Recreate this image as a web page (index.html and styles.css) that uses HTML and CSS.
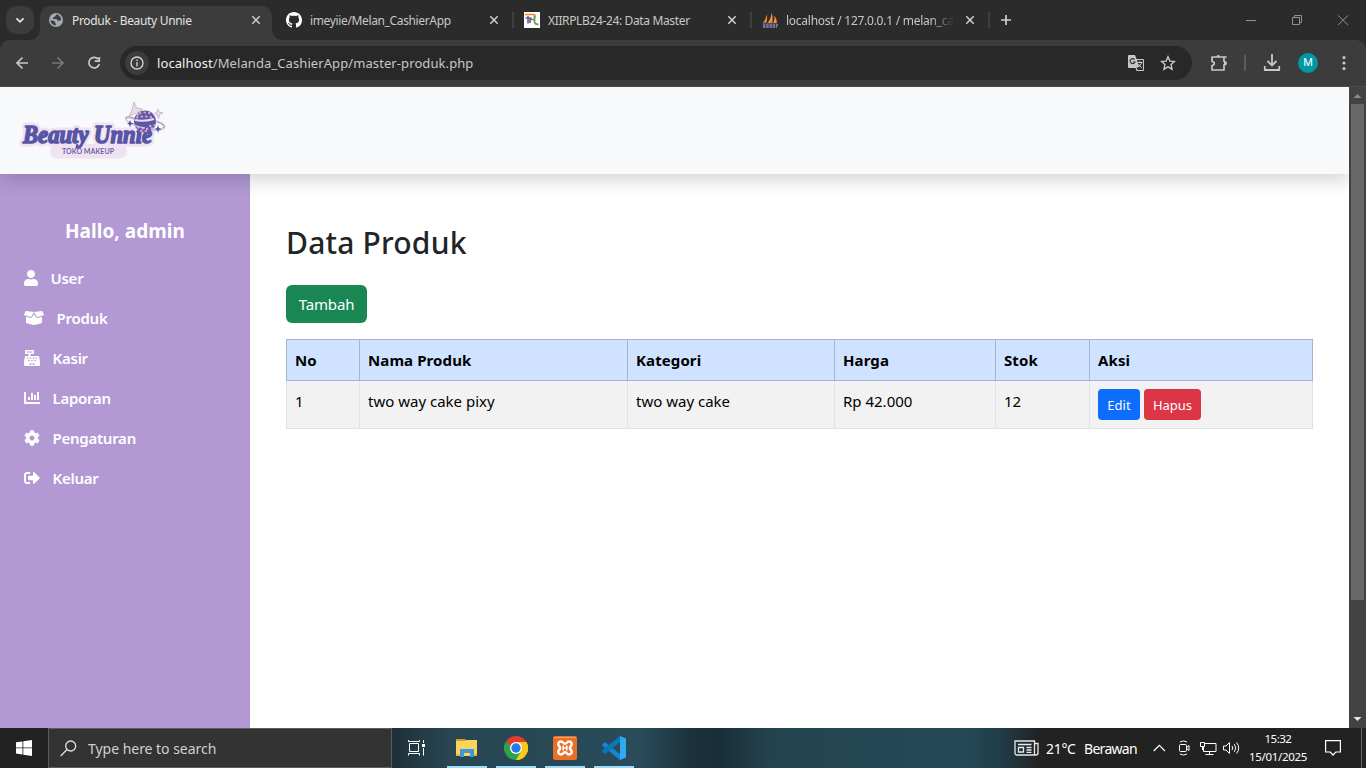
FILE: index.html
```html
<!DOCTYPE html>
<html lang="id">
<head>
<meta charset="utf-8">
<title>Produk - Beauty Unnie</title>
<link rel="stylesheet" href="styles.css">
</head>
<body>
<div class="browser">
  <div class="tabstrip">
    <div class="tab-menu"><svg width="28" height="28" fill="none" stroke="#e3e3e3" stroke-width="1.8"><path d="M10.500 12.300l3.500 3.500 3.500-3.500"/></svg></div>
    <div class="tab active">
      <svg class="fav" width="16" height="16" viewBox="0 0 16 16"><circle cx="8" cy="8" r="7" fill="#a4a9b3"/><path d="M8.500 2.500q-1 .3-.8 1.300-.2 1 -1.700 1.200Q4.500 5.500 5 6.800q1.500.3 3 .2 1.500.3 1.500 1.700 2 .2 3.800-.4-.2-3.800-3-5.300-1-.6-1.800-.5zM2.500 8.500q2.500-.3 3.500.7 1.300.3 1.300 1.500-.2.900.7 1.300-.2 1-.7 1.400Q3 12.500 2.500 8.500z" fill="#3c3c3c"/></svg>
      <span class="tab-title t1">Produk - Beauty Unnie</span>
      <svg class="close" width="10" height="10" viewBox="0 0 10 10"><path d="M1.300 1.300l7.400 7.400m0-7.400l-7.400 7.400"/></svg>
    </div>
    <div class="tab">
      <svg class="fav" width="16" height="16" viewBox="0 0 16 16"><path fill="#fff" d="M8 0C3.580 0 0 3.580 0 8c0 3.540 2.290 6.530 5.470 7.590.4.070.55-.17.55-.38 0-.19-.01-.82-.01-1.490-2.010.37-2.530-.49-2.690-.94-.09-.23-.48-.94-.82-1.130-.28-.15-.68-.52-.01-.53.63-.01 1.080.58 1.230.82.720 1.210 1.870.87 2.330.66.070-.52.280-.87.510-1.070-1.780-.2-3.640-.89-3.640-3.950 0-.87.310-1.590.820-2.150-.08-.2-.36-1.020.08-2.120 0 0 .67-.21 2.200.820.640-.18 1.320-.27 2-.27s1.360.09 2 .27c1.530-1.040 2.200-.82 2.200-.82.440 1.100.16 1.920.08 2.120.51.56.82 1.270.82 2.150 0 3.070-1.870 3.750-3.650 3.950.29.25.54.73.54 1.480 0 1.070-.01 1.930-.01 2.200 0 .21.15.46.55.38A8.010 8.010 0 0 0 16 8c0-4.420-3.580-8-8-8z"/></svg>
      <span class="tab-title t2">imeyiie/Melan_CashierApp</span>
      <svg class="close" width="10" height="10" viewBox="0 0 10 10"><path d="M1.300 1.300l7.400 7.400m0-7.400l-7.400 7.400"/></svg>
    </div>
    <div class="tab divided">
      <svg class="fav" width="16" height="16" viewBox="0 0 16 16"><path fill="#fff" d="M0 0h16v16H0z"/><g fill="none" stroke-width="1.700"><path stroke="#f08a24" d="M1 2.500h8.500q2 .5 1.500 3"/><path stroke="#d33a3a" d="M1.500 6h6M6 6v5"/><path stroke="#2f86c9" d="M4 4v7.500M6 7.500h4"/><path stroke="#57ab45" d="M10.500 4v6q.5 2.500 4 2.300"/></g></svg>
      <span class="tab-title t3">XIIRPLB24-24: Data Master</span>
      <svg class="close" width="10" height="10" viewBox="0 0 10 10"><path d="M1.300 1.300l7.400 7.400m0-7.400l-7.400 7.400"/></svg>
    </div>
    <div class="tab divided">
      <svg class="fav" width="16" height="16" viewBox="0 0 16 16"><path fill="#f2902c" d="M5 2Q4 7 1 11l3.500-.5Q5.500 6 5 2zM9.500.5Q9 7 5.500 11l5-.2Q11.500 5 9.500.5zM12.500 3.500q.5 4-1.200 7.300l3.700.4Q15 7 12.500 3.500z"/><path d="M1 13h15M1 15h14" stroke="#8b90bd" stroke-width="1.500" stroke-dasharray="2.500 .7"/><path d="M.5 11.700h14" stroke="#4b5384"/></svg>
      <span class="tab-title t4 fade">localhost / 127.0.0.1 / melan_cas</span>
      <svg class="close" width="10" height="10" viewBox="0 0 10 10"><path d="M1.300 1.300l7.400 7.400m0-7.400l-7.400 7.400"/></svg>
    </div>
    <div class="new-tab"><svg width="12" height="12" stroke="#d0d0d0" stroke-width="1.700"><path d="M6 1v10M1 6h10"/></svg></div>
    <div class="window-buttons">
      <svg width="46" height="40" viewBox="0 0 46 40"><path d="M18 20.500h10"/></svg>
      <svg width="46" height="40" viewBox="0 0 46 40"><path d="M18.500 17.500h7v7h-7zM20.500 17.500v-2h7v7h-2"/></svg>
      <svg width="46" height="40" viewBox="0 0 46 40"><path d="M18 15.500l10 9.500m0-9.500L18 25"/></svg>
    </div>
  </div>
  <div class="toolbar">
    <svg class="nav" width="36" height="46" viewBox="0 0 36 46"><path d="M16.500 17.500L11 23l5.500 5.500M11.500 23H22"/></svg>
    <svg class="nav dim" width="36" height="46" viewBox="0 0 36 46"><path d="M15.500 17.500L21 23l-5.500 5.500M20.500 23H10"/></svg>
    <svg class="nav" width="36" height="46" viewBox="0 0 36 46"><path d="M20.300 19.300A5.300 5.300 0 1 0 21.300 24M21.300 17v4.200h-4.600"/></svg>
    <div class="omnibox">
      <div class="site-info"><svg width="14" height="14" fill="none" stroke="#d2d2d2" stroke-width="1.400"><circle cx="7" cy="7" r="6"/><path d="M7 6v4.500M7 3.500V5"/></svg></div>
      <span class="url"><b>localhost</b>/Melanda_CashierApp/master-produk.php</span>
      <svg class="translate" width="18" height="18" viewBox="0 0 18 18"><path fill="#c7c7c7" d="M2 1h6l1.500 4H16q1 0 1 1v10q0 1-1 1H9.500l-1-3H2q-1 0-1-1V2q0-1 1-1z"/><path fill="#2c2c2c" d="M10 6h6v10h-5.500l-1-3H12z"/><path d="M7.600 5.500A2.500 2.500 0 1 0 8 8H5.800" fill="none" stroke="#333" stroke-width="1.200"/><path d="M10.500 8.500h5M13 7v1.500M14.500 9q-1 3-4 4.500M11.500 10q1 2 3.500 4" fill="none" stroke="#c7c7c7"/></svg>
      <svg class="star" width="16" height="16" viewBox="0 0 16 16"><path d="M8 1.800l1.900 4.300 4.600.4-3.500 3.100 1.100 4.600L8 11.800l-4.100 2.400L5 9.600 1.500 6.500l4.600-.4z" fill="none" stroke="#c7c7c7" stroke-width="1.400"/></svg>
    </div>
    <svg class="puzzle" width="18" height="18" viewBox="0 0 18 18"><path d="M2 3h14v0H14v4.500q2 .2 2 1.700t-2 1.700V16H2v-4.500q2.300-.4 2.300-2T2 7.500V3h12" fill="none" stroke="#c7c7c7" stroke-width="1.700" stroke-linejoin="round"/><path d="M6.500 3q0-2 1.800-2t1.700 2zM14 7.500q2.700 0 2.700 1.700T14 11z" fill="#c7c7c7"/></svg>
    <i class="bar"></i>
    <svg class="download" width="20" height="18" viewBox="0 0 20 18"><path d="M10 0v11M5.500 7L10 11.500 14.500 7M2.800 12v4h14.400v-4" fill="none" stroke="#c7c7c7" stroke-width="1.800"/></svg>
    <div class="avatar">M</div>
    <svg class="more" width="4" height="16" fill="#c7c7c7"><circle cx="2" cy="2.500" r="1.600"/><circle cx="2" cy="8" r="1.600"/><circle cx="2" cy="13.500" r="1.600"/></svg>
  </div>
</div>

<div class="viewport">
  <div class="page">
    <header class="header">
      <svg class="logo" width="150" height="60" viewBox="0 0 150 60">
        <rect x="31" y="42" width="77" height="14.500" rx="7.200" fill="#f1e2f1"/>
        <g stroke-linejoin="round">
          <text class="script outline" x="4" y="40.500" textLength="129" lengthAdjust="spacingAndGlyphs">Beauty Unnie</text>
          <text class="script" x="4" y="40.500" textLength="129" lengthAdjust="spacingAndGlyphs">Beauty Unnie</text>
        </g>
        <circle cx="126" cy="19.500" r="11" fill="#5d57a6"/>
        <g stroke="#d0a3cc" stroke-width="2.200" fill="none" stroke-dasharray="2.400 2.200"><path d="M120 11.500q6-2 12 0M117 15.500q9-2 18 0M130 24q3 0 6-1M118 25q8 3 16 1M121 29h9"/></g>
        <path d="M116 18q8 2 19-1" stroke="#eadcf0" stroke-width="2" fill="none"/>
        <path d="M115 17q-11-3-7 2 8 6 18 7M137 19q11 3 8 7-3 3-13 2" fill="none" stroke="#d9bddb" stroke-width="1.500"/>
        <path d="M115 16q-9-3-8 1M138 20q9 3 6 6" fill="none" stroke="#77719a" stroke-width=".7"/>
        <path d="M115 0l2.500 6 6 1-5 3 1 4-4-2.500-5 2.500 2-5zM139 7l1 3 4 1-3.500 1.500-1 4-1.500-4-2.500-1 2.500-1z" fill="#eadceb" stroke="#aaa1ad" stroke-width=".6"/>
        <path d="M111 18l1 2.500 3 1-3 1-1 3-1-3-2-1 2-1zM139 23l1 3 3 1-3 1-1 3-1-3-3-1 3-1z" fill="#5755a5"/>
        <text class="tag" x="43" y="52" textLength="52">TOKO MAKEUP</text>
      </svg>
    </header>
    <div class="columns">
      <nav class="sidebar">
        <h2 class="hello">Hallo, admin</h2>
        <a class="item"><svg width="14" height="16" viewBox="0 0 448 512"><path d="M224 256c70.700 0 128-57.300 128-128S294.700 0 224 0 96 57.300 96 128s57.300 128 128 128zm89.600 32h-16.700c-22.200 10.200-46.900 16-72.900 16s-50.600-5.800-72.900-16h-16.700C60.200 288 0 348.200 0 422.400V464c0 26.500 21.500 48 48 48h352c26.500 0 48-21.500 48-48v-41.600c0-74.200-60.200-134.400-134.400-134.400z"/></svg><span>User</span></a>
        <a class="item"><svg width="20" height="16" viewBox="0 0 640 512"><path d="M425.700 256c-16.900 0-32.800-9-41.400-23.400L320 126l-64.200 106.600c-8.700 14.500-24.600 23.500-41.500 23.500-4.500 0-9-.6-13.300-1.900L64 215v178c0 14.700 10 27.500 24.200 31l216.200 54.100c10.200 2.500 20.900 2.500 31 0L551.800 424c14.200-3.600 24.200-16.400 24.200-31V215l-137 39.100c-4.300 1.300-8.800 1.900-13.300 1.900zm212.600-112.200L586.800 41c-3.100-6.200-9.800-9.800-16.700-8.900L320 64l91.700 152.100c3.800 6.300 11.400 9.300 18.500 7.300l197.900-56.500c9.900-2.900 14.700-13.900 10.200-23.100zM53.200 41L1.700 143.800c-4.600 9.200.3 20.200 10.100 23l197.900 56.500c7.100 2 14.700-1 18.500-7.300L320 64 69.800 32.100c-6.900-.8-13.500 2.700-16.600 8.900z"/></svg><span>Produk</span></a>
        <a class="item"><svg width="16" height="16" viewBox="0 0 512 512"><path d="M511.100 378.800l-26.700-160c-2.600-15.400-15.900-26.700-31.600-26.700H208v-64h96c8.800 0 16-7.200 16-16V16c0-8.800-7.200-16-16-16H48c-8.800 0-16 7.200-16 16v96c0 8.800 7.200 16 16 16h96v64H59.100c-15.600 0-29 11.300-31.600 26.700L.8 378.700c-.6 3.500-.9 7-.9 10.500V480c0 17.700 14.300 32 32 32h448c17.700 0 32-14.300 32-32v-90.700c.1-3.500-.2-7-.8-10.500zM280 248c0-8.800 7.200-16 16-16h16c8.800 0 16 7.200 16 16v16c0 8.800-7.200 16-16 16h-16c-8.800 0-16-7.200-16-16v-16zm-32 64h16c8.800 0 16 7.200 16 16v16c0 8.800-7.200 16-16 16h-16c-8.800 0-16-7.200-16-16v-16c0-8.800 7.200-16 16-16zm-32-80c8.800 0 16 7.200 16 16v16c0 8.800-7.200 16-16 16h-16c-8.800 0-16-7.200-16-16v-16c0-8.800 7.200-16 16-16h16zM80 80V48h192v32H80zm40 200h-16c-8.800 0-16-7.200-16-16v-16c0-8.800 7.200-16 16-16h16c8.800 0 16 7.200 16 16v16c0 8.800-7.200 16-16 16zm16 64v-16c0-8.800 7.200-16 16-16h16c8.800 0 16 7.200 16 16v16c0 8.800-7.200 16-16 16h-16c-8.800 0-16-7.200-16-16zm216 112c0 4.400-3.600 8-8 8H168c-4.400 0-8-3.600-8-8v-16c0-4.400 3.600-8 8-8h176c4.400 0 8 3.600 8 8v16zm24-112c0 8.800-7.200 16-16 16h-16c-8.800 0-16-7.200-16-16v-16c0-8.800 7.200-16 16-16h16c8.800 0 16 7.200 16 16v16zm48-80c0 8.800-7.200 16-16 16h-16c-8.800 0-16-7.200-16-16v-16c0-8.800 7.200-16 16-16h16c8.800 0 16 7.200 16 16v16z"/></svg><span>Kasir</span></a>
        <a class="item"><svg width="16" height="16" viewBox="0 0 16 16"><path d="M0 2h2v10h14v2H0zM4 7h2v3H4zM7 3h2v7H7zM10 5h2v5h-2zM13 2h2v8h-2z"/></svg><span>Laporan</span></a>
        <a class="item"><svg width="16" height="16" viewBox="0 0 512 512"><path d="M487.400 315.700l-42.600-24.600c4.300-23.200 4.300-47 0-70.200l42.600-24.600c4.900-2.800 7.100-8.600 5.500-14-11.100-35.600-30-67.800-54.700-94.600-3.800-4.100-10-5.100-14.800-2.300L380.800 110c-17.900-15.400-38.500-27.300-60.800-35.100V25.800c0-5.600-3.900-10.500-9.400-11.700-36.700-8.200-74.300-7.800-109.200 0-5.500 1.200-9.400 6.100-9.400 11.700V75c-22.200 7.900-42.800 19.800-60.800 35.100L88.700 85.500c-4.900-2.800-11-1.900-14.800 2.300-24.700 26.700-43.600 58.900-54.700 94.600-1.700 5.400.6 11.200 5.500 14L67.300 221c-4.300 23.200-4.300 47 0 70.200l-42.600 24.600c-4.900 2.800-7.100 8.600-5.500 14 11.100 35.600 30 67.800 54.700 94.600 3.800 4.100 10 5.100 14.800 2.300l42.600-24.600c17.900 15.400 38.500 27.300 60.800 35.100v49.200c0 5.600 3.900 10.500 9.400 11.700 36.700 8.200 74.300 7.800 109.200 0 5.500-1.200 9.400-6.100 9.400-11.700v-49.200c22.200-7.900 42.800-19.800 60.800-35.100l42.600 24.600c4.900 2.800 11 1.900 14.800-2.300 24.700-26.700 43.600-58.900 54.700-94.600 1.500-5.500-.7-11.300-5.600-14.100zM256 336c-44.100 0-80-35.900-80-80s35.900-80 80-80 80 35.900 80 80-35.900 80-80 80z"/></svg><span>Pengaturan</span></a>
        <a class="item"><svg width="16" height="16" viewBox="0 0 512 512"><path d="M497 273L329 441c-15 15-41 4.500-41-17v-96H152c-13.300 0-24-10.700-24-24v-96c0-13.300 10.700-24 24-24h136V88c0-21.400 25.900-32 41-17l168 168c9.300 9.400 9.300 24.600 0 34zM192 436v-40c0-6.600-5.400-12-12-12H96c-17.700 0-32-14.300-32-32V160c0-17.700 14.300-32 32-32h84c6.600 0 12-5.400 12-12V76c0-6.600-5.400-12-12-12H96c-53 0-96 43-96 96v192c0 53 43 96 96 96h84c6.600 0 12-5.400 12-12z"/></svg><span>Keluar</span></a>
      </nav>
      <main class="content">
        <h1 class="title">Data Produk</h1>
        <a class="btn add">Tambah</a>
        <table class="table">
          <colgroup><col class="c-no"><col class="c-name"><col class="c-cat"><col class="c-price"><col class="c-stock"><col class="c-act"></colgroup>
          <thead><tr><th>No</th><th>Nama Produk</th><th>Kategori</th><th>Harga</th><th>Stok</th><th>Aksi</th></tr></thead>
          <tbody><tr><td>1</td><td>two way cake pixy</td><td>two way cake</td><td>Rp 42.000</td><td>12</td><td><div class="actions"><a class="btn small edit">Edit</a><a class="btn small delete">Hapus</a></div></td></tr></tbody>
        </table>
      </main>
    </div>
  </div>
  <div class="scrollbar">
    <svg width="17" height="17"><path d="M4.500 11l4-4 4 4z" fill="#8b8b8b"/></svg>
    <div class="thumb"></div>
    <svg width="17" height="17"><path d="M4.500 6l4 4 4-4z" fill="#e8e8e8"/></svg>
  </div>
</div>

<div class="taskbar">
  <div class="start"><svg width="16" height="16" fill="#fff"><path d="M0 2.300l6.500-.9v6.100H0zM7.300 1.300L16 0v7.500H7.300zM0 8.300h6.500v6.200L0 13.600zM7.300 8.300H16V16l-8.700-1.200z"/></svg></div>
  <div class="search"><svg width="17" height="17" fill="none" stroke="#e0e0e0" stroke-width="1.300"><circle cx="10.700" cy="6" r="5"/><path d="M7 9.500L.7 16"/></svg><span>Type here to search</span></div>
  <div class="task-view"><svg width="17" height="16" viewBox="0 0 17 16" fill="none" stroke="#fff"><path d="M1.500 3.500h9v8h-9zM.5 0v1.500h11V0M.5 15.500v-2h11v2M15.500 0v3M15.500 8v7.500"/><path d="M14 4h3v3h-3z" fill="#fff" stroke="none"/></svg></div>
  <div class="app"><svg width="24" height="24" viewBox="0 0 24 24"><path d="M1 3h9l2 2H1z" fill="#d99a14"/><path d="M1 5h9l1.500-1H22v16H1z" fill="#fbd45f"/><path d="M5 13h14v8h-4v-4H9v4H5z" fill="#3f97dd"/><path d="M1 18h4v2H1zM19 18h3v2h-3z" fill="#edb535"/></svg></div>
  <div class="app"><svg width="24" height="24" viewBox="0 0 24 24"><path d="M12 12L1.600 6A12 12 0 0 1 22.400 6z" fill="#e33b2e"/><path d="M12 12L22.400 6A12 12 0 0 1 12 24z" fill="#fdc918"/><path d="M12 12v12A12 12 0 0 1 1.600 6z" fill="#2ea24c"/><path d="M12 6h10.400A12 12 0 0 1 12 24l5.200-9z" fill="#fdc918"/><path d="M6.800 15L1.600 6 12 12l5.200 3L12 24z" fill="#2ea24c"/><circle cx="12" cy="12" r="6" fill="#fff"/><circle cx="12" cy="12" r="4.700" fill="#2878ea"/></svg></div>
  <div class="app"><svg width="24" height="24" viewBox="0 0 24 24"><rect width="24" height="24" rx="2" fill="#e96f24"/><path d="M1 1.500h22" stroke="#f5a36b"/><path d="M8 5.500c-2.700 0-3.500 2.800-2 4.300 1.300 1.300 1.300 3.100 0 4.400-1.500 1.500-.7 4.300 2 4.300 2.300 0 2.200-2.200 4-2.200s1.700 2.200 4 2.200c2.700 0 3.500-2.800 2-4.300-1.300-1.300-1.300-3.100 0-4.400 1.500-1.500.7-4.300-2-4.300-2.300 0-2.200 2.200-4 2.200S10.300 5.500 8 5.500z" fill="none" stroke="#fff" stroke-width="2.500"/><path d="M10.200 9.500v5M13.800 9.500v5M10.200 12h3.600" stroke="#fff" stroke-width="1.600"/></svg></div>
  <div class="app"><svg width="24" height="24" viewBox="0 0 24 24"><path d="M.5 8L3 6l15 12v6L.5 10z" fill="#1686d3"/><path d="M.5 16L3 18 18 6V0L.5 14z" fill="#0878bd"/><path d="M18 0l6 2.500v19L18 24z" fill="#2eaaf2"/></svg></div>
  <div class="tray">
    <svg class="news" width="25" height="16" viewBox="0 0 25 16" fill="none" stroke="#e8e8e8" stroke-width="1.300"><path d="M1 1h19.500v14H3q-2 0-2-2zM20.500 3.500H24V13q0 2-2 2h-2"/><path d="M4 4.500h13.500M12.500 7.500h5M12.500 10h5M12.500 12.300h5M4.500 7.500h5v4.500h-5z"/></svg>
    <span class="weather temp">21°C</span><span class="weather cond">Berawan</span>
    <svg class="chev" width="13" height="8" fill="none" stroke="#fff" stroke-width="1.200"><path d="M.7 7l5.600-5.600L12 7"/></svg>
    <svg class="meet" width="12" height="16" fill="none" stroke="#fff"><path d="M1.500 5.500q0-1 1-1h5q1 0 1 1v5q0 1-1 1h-5q-1 0-1-1zM8.500 7.500l2.500-2v5l-2.500-2M2 2q3.500-2.200 7 0M2 14q3.500 2.200 7 0"/></svg>
    <svg class="net" width="17" height="15" fill="none" stroke="#fff"><path d="M5 2.500h11v8H3.500V6M9.500 10.500v3M5.500 13.500h8M.5 1.500h4v4h-4zM2.500 5.500V9"/></svg>
    <svg class="vol" width="17" height="14" fill="none" stroke="#fff"><path d="M.5 5h2.500l3.500-3.500v11L3 9H.5zM9 5q1.500 2 0 4M11.300 3.200q3 3.800 0 7.600M13.600 1.500q4.200 5.500 0 11"/></svg>
    <div class="clock"><span class="time">15:32</span><span class="date">15/01/2025</span></div>
    <svg class="note" width="16" height="16" fill="none" stroke="#fff" stroke-width="1.200"><path d="M.6.600h14.800V12h-4.600L8 15l-2.800-3H.6z"/></svg>
    <i class="peek"></i>
  </div>
</div>
</body>
</html>
```
FILE: styles.css
```css
* { box-sizing: border-box; }
body { margin: 0; width: 1366px; height: 768px; overflow: hidden; font-family: "Noto Sans", "Open Sans", sans-serif; font-size: 15px; display: flex; flex-direction: column; }
svg { display: block; flex: none; }
span { white-space: nowrap; }

/* Browser chrome */
.browser { height: 87px; background: #2b2b2b; flex: none; }
.tabstrip { height: 40px; display: flex; padding-left: 6px; }
.tab-menu { width: 28px; height: 28px; margin: 6px 6px 0 0; border-radius: 10px; background: #3c3c3c; }
.tab { width: 238px; height: 28px; margin-top: 6px; padding: 0 11px 0 14px; display: flex; align-items: center; gap: 8px; color: #c7c7c7; position: relative; }
.tab.active { width: 232px; height: 34px; padding: 0 11px 6px 8px; background: #3c3c3c; border-radius: 10px 10px 0 0; color: #e3e3e3; }
.tab.active::before, .tab.active::after { content: ""; position: absolute; bottom: 0; width: 10px; height: 10px; }
.tab.active::before { left: -10px; background: radial-gradient(circle at 0 0, #2b2b2b 9.500px, #3c3c3c 10px); }
.tab.active::after { right: -10px; background: radial-gradient(circle at 100% 0, #2b2b2b 9.500px, #3c3c3c 10px); }
.tab.divided::before { content: ""; position: absolute; left: 2px; top: 6px; width: 2px; height: 16px; background: #3f3f3f; }
.tab-title { flex: 1; min-width: 0; font-size: 12px; line-height: 18px; letter-spacing: -0.360px; padding-top: 1px; }
.t1 { letter-spacing: -0.320px; }
.t4 { letter-spacing: -0.260px; }
.fade { -webkit-mask-image: linear-gradient(90deg, #000 145px, transparent 168px); mask-image: linear-gradient(90deg, #000 145px, transparent 168px); }
.close { fill: none; stroke: #d0d0d0; stroke-width: 1.500px; }
.new-tab { width: 40px; height: 28px; margin-top: 6px; display: grid; place-items: center; position: relative; }
.new-tab::before { content: ""; position: absolute; left: 2px; top: 6px; width: 2px; height: 16px; background: #3f3f3f; }
.window-buttons { display: flex; margin-left: auto; fill: none; stroke: #919191; }
.toolbar { height: 47px; background: #3c3c3c; border-radius: 10px 10px 0 0; border-bottom: 1px solid #4b4b4b; display: flex; align-items: center; padding: 0 20px 0 6px; }
.nav { fill: none; stroke: #c7c7c7; stroke-width: 1.700px; }
.dim { stroke: #777; }
.omnibox { width: 1072px; height: 34px; margin-left: 6px; border-radius: 17px; background: #282828; display: flex; align-items: center; padding: 0 16px 0 5px; }
.site-info { width: 24px; height: 24px; border-radius: 12px; background: #3c3c3c; display: grid; place-items: center; }
.url { margin-left: 8px; flex: 1; color: #c7c7c7; font-size: 13px; letter-spacing: 0.090px; line-height: 20px; }
.url b { font-weight: 400; color: #f0f0f0; }
.translate { margin-right: 15px; }
.puzzle { margin-left: 18px; }
.bar { width: 2px; height: 16px; margin: 0 16px 0 16px; background: #5b5b5b; }
.avatar { width: 20px; height: 20px; margin-left: 16px; border-radius: 50%; background: #0097a7; color: #fff; font: 11px/20px Roboto, sans-serif; text-align: center; }
.more { margin-left: auto; }

/* Web page */
.viewport { height: 641px; display: flex; flex: none; background: #fff; }
.page { flex: 1; display: flex; flex-direction: column; overflow: hidden; }
.header { height: 87px; flex: none; background: #f8f9fb; box-shadow: 0 8px 16px rgba(0,0,0,.15); position: relative; z-index: 1; padding: 15px 19px; }
.logo { overflow: visible; }
.script { font: italic bold 25px "Liberation Serif", serif; fill: #5755a5; stroke: #5755a5; stroke-width: 1.600px; }
.outline { stroke: #f1e2f1; stroke-width: 7px; }
.tag { font: 700 7px Lato, sans-serif; fill: #6964a8; }
.columns { flex: 1; display: flex; }
.sidebar { width: 250px; background: #b299d4; padding: 43px 24px 0; color: #fff; fill: #fff; }
.hello { margin: 0 0 21px; text-align: center; font-size: 19px; line-height: 28px; font-weight: 700; letter-spacing: 0.050px; }
.item { display: flex; align-items: center; height: 24px; margin-bottom: 16px; gap: 12.500px; font-weight: 600; line-height: 24px; letter-spacing: -0.250px; }
.content { flex: 1; padding: 50px 36px 0; color: #000; }
.title { margin: 0; font-size: 30px; line-height: 38px; font-weight: 500; letter-spacing: 0.200px; color: #212529; }
.btn { display: inline-block; border-radius: 6px; color: #fff; }
.add { margin: 23px 0 16px; height: 38px; width: 81px; line-height: 38px; letter-spacing: -0.150px; text-align: center; background: #198754; vertical-align: top; }
.table { width: 1027px; table-layout: fixed; border-collapse: collapse; line-height: 24px; }
.c-no { width: 73px; } .c-name { width: 268px; } .c-cat { width: 207px; } .c-price { width: 161px; } .c-stock { width: 94px; }
.table th, .table td { padding: 8px; text-align: left; vertical-align: top; border: 1px solid #dee2e6; background: #f2f2f2; }
.table th { background: #cfe2ff; border-color: #a6b5cc; font-weight: 700; letter-spacing: 0.100px; }
.actions { display: flex; gap: 4px; }
.small { height: 31px; line-height: 32px; border-radius: 4px; font-size: 13px; text-align: center; }
.edit { width: 42px; background: #0d6efd; }
.delete { width: 57px; background: #dc3545; }
.scrollbar { width: 17px; background: #424242; display: flex; flex-direction: column; }
.thumb { width: 13px; height: 496px; margin: 0 2px auto; background: #686868; }

/* Taskbar */
.taskbar { height: 40px; flex: none; display: flex; color: #fff; background: linear-gradient(90deg, #222 0 48px, #1e3038 392px, #284653 450px, #294b5a 640px, #1b323d 690px, #182e39 720px, #24434f 770px, #264958 960px, #203d49 1000px, #222 1040px); }
.start { width: 48px; display: grid; place-items: center; background: #222; }
.search { width: 344px; border: 1px solid #5c5c5c; background: #333; display: flex; align-items: center; gap: 11px; padding-left: 11px; color: #d0d0d0; font-size: 14px; letter-spacing: -0.030px; }
.task-view { width: 50px; display: grid; place-items: center; padding-right: 1px; }
.app { width: 40px; margin: 0 4px 0 5px; border-bottom: 2px solid #9fdcfb; display: grid; place-items: center; padding-top: 2px; }
.tray { margin-left: auto; width: 352px; display: flex; align-items: center; }
.weather { font-size: 14px; }
.temp { margin-left: 7px; width: 38px; letter-spacing: -0.300px; }
.cond { width: 69px; letter-spacing: -0.700px; }
.chev { margin-left: 0; }
.meet { margin-left: 12px; }
.net { margin-left: 10px; }
.vol { margin-left: 6px; }
.clock { width: 76px; display: flex; flex-direction: column; text-align: center; font-size: 11.500px; line-height: 18px; letter-spacing: -0.300px; }
.time { letter-spacing: -0.500px; }
.note { margin-left: 9px; }
.peek { width: 1px; height: 40px; margin-left: auto; margin-right: 4px; background: #666; }
```
